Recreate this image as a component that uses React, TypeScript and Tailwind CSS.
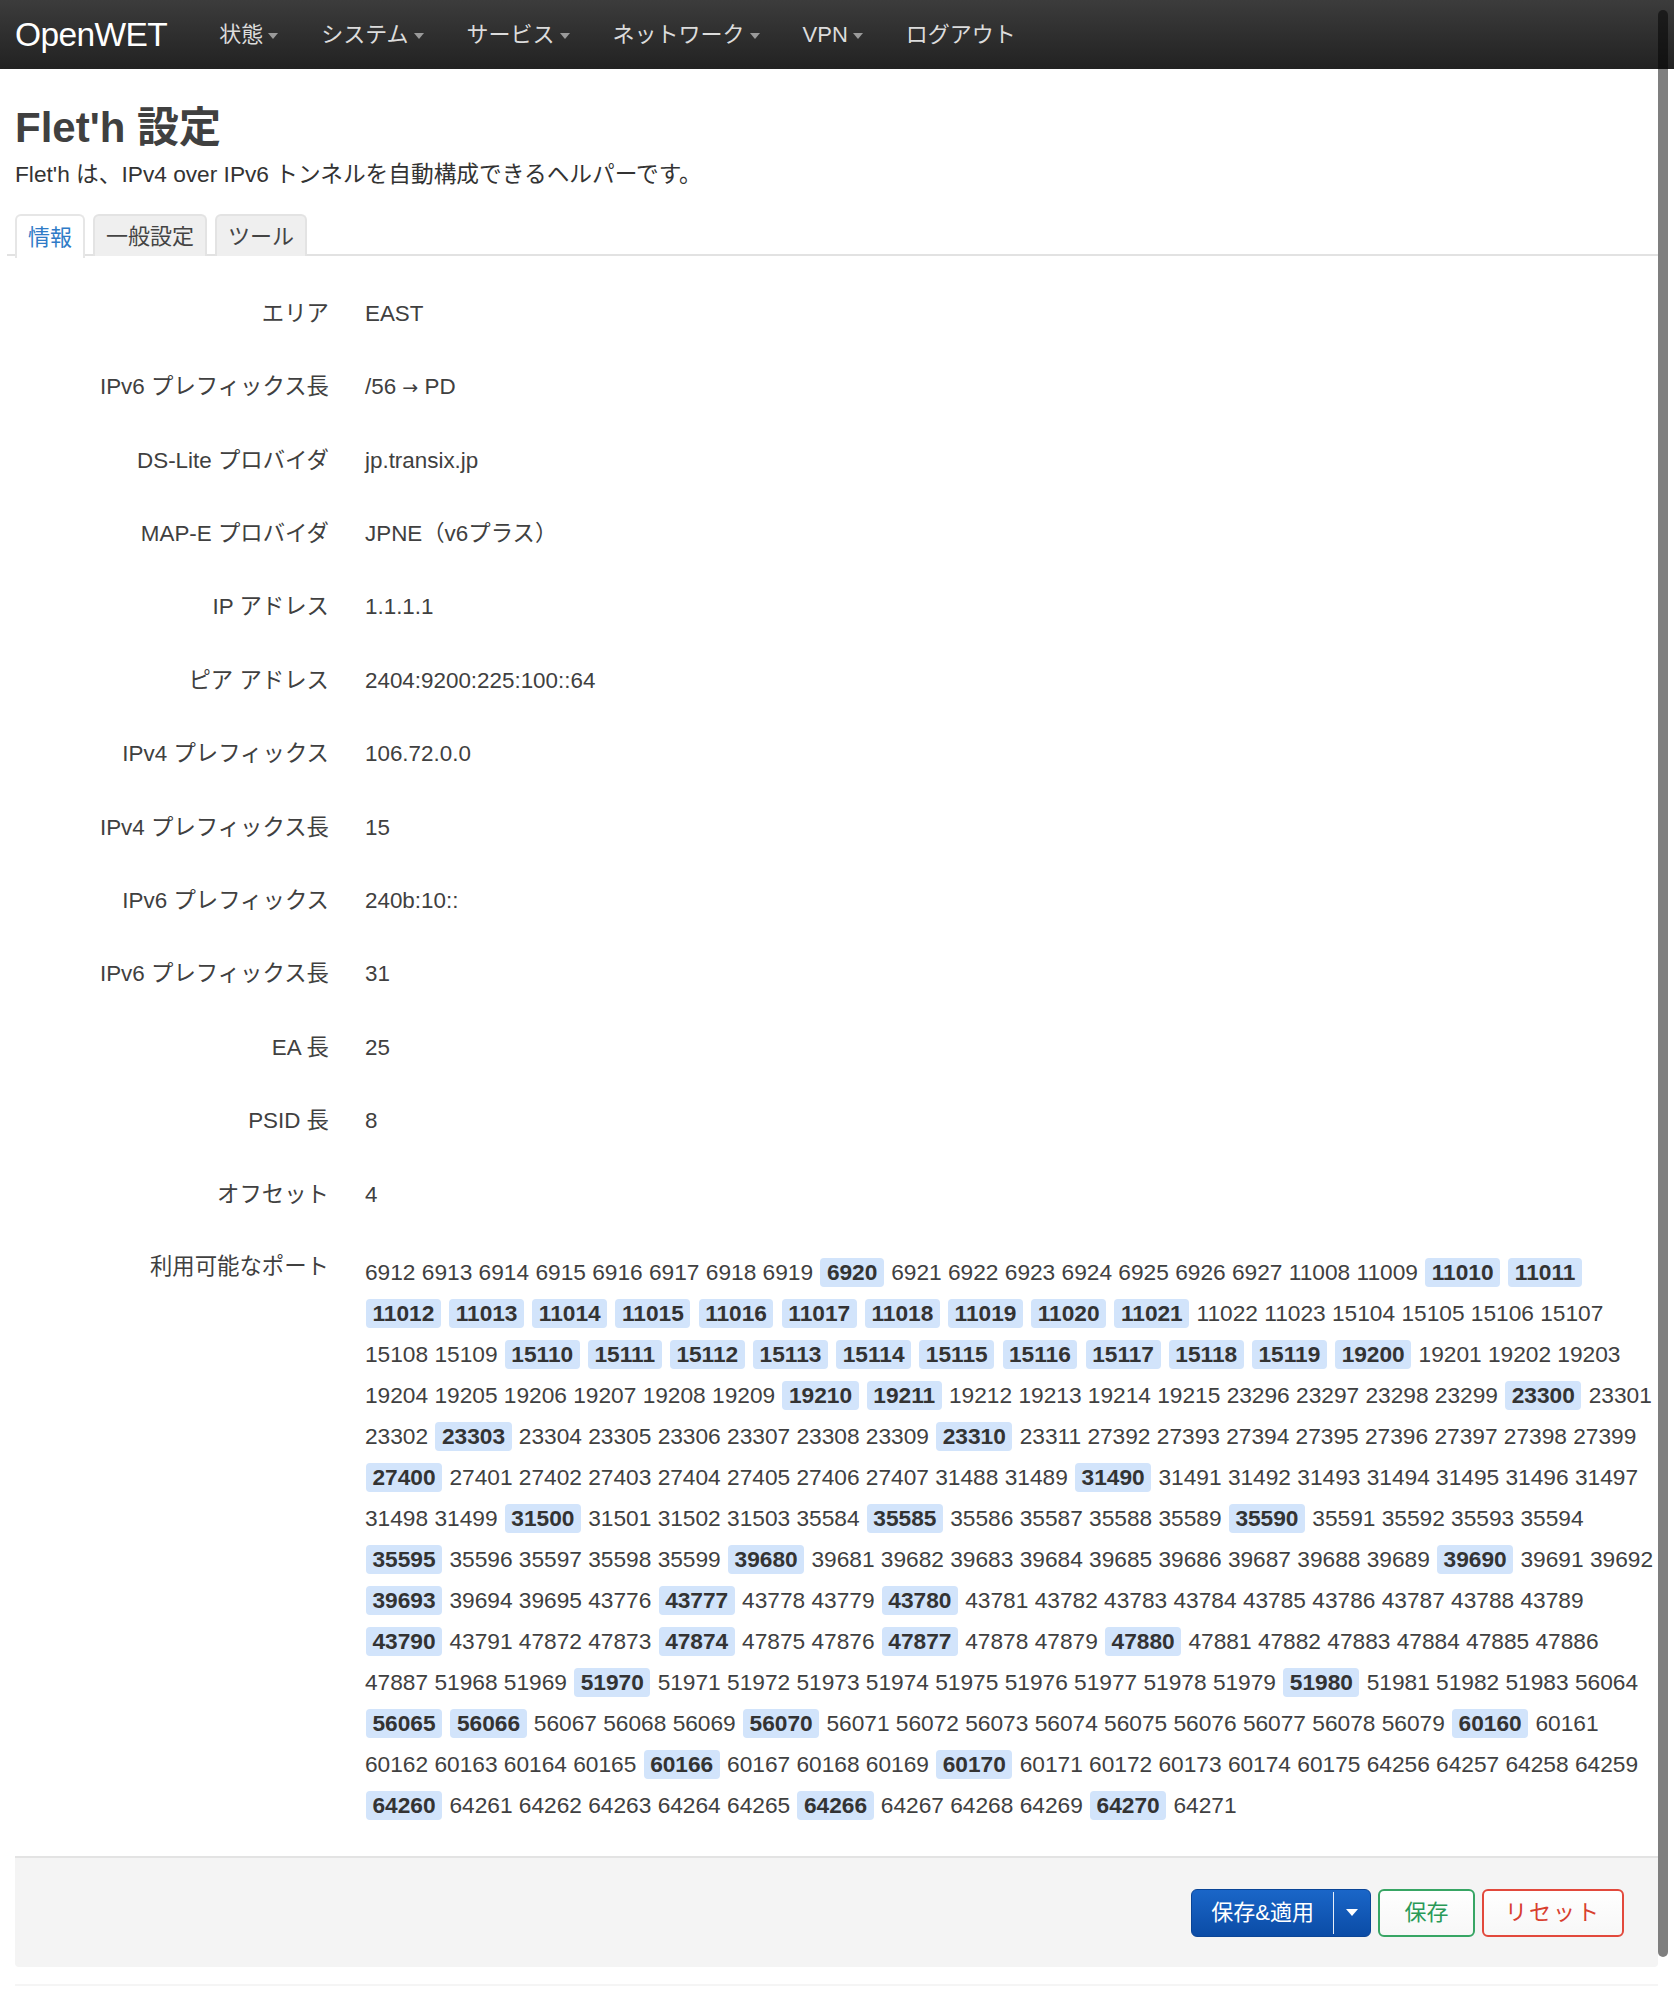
import React from "react";

const font = "font-['Liberation_Sans','Noto_Sans_CJK_JP',sans-serif]";

const navItems = [
  { label: "状態", caret: true },
  { label: "システム", caret: true },
  { label: "サービス", caret: true },
  { label: "ネットワーク", caret: true },
  { label: "VPN", caret: true },
  { label: "ログアウト", caret: false },
];

const rows: [string, React.ReactNode][] = [
  ["エリア", "EAST"],
  [
    "IPv6 プレフィックス長",
    <>
      /56 <span className="font-['DejaVu_Sans',sans-serif] text-[19px]">→</span> PD
    </>,
  ],
  ["DS-Lite プロバイダ", "jp.transix.jp"],
  ["MAP-E プロバイダ", "JPNE（v6プラス）"],
  ["IP アドレス", "1.1.1.1"],
  ["ピア アドレス", "2404:9200:225:100::64"],
  ["IPv4 プレフィックス", "106.72.0.0"],
  ["IPv4 プレフィックス長", "15"],
  ["IPv6 プレフィックス", "240b:10::"],
  ["IPv6 プレフィックス長", "31"],
  ["EA 長", "25"],
  ["PSID 長", "8"],
  ["オフセット", "4"],
];

// 15 blocks of 16 ports, as computed by the MAP-E rule
const ports: number[] = [];
for (let a = 1; a <= 15; a++) {
  const base = a * 4096 + 2816;
  for (let i = 0; i < 16; i++) ports.push(base + i);
}

const marked = new Set([
  6920, 11010, 11011, 11012, 11013, 11014, 11015, 11016, 11017, 11018, 11019, 11020, 11021,
  15110, 15111, 15112, 15113, 15114, 15115, 15116, 15117, 15118, 15119, 19200, 19210, 19211,
  23300, 23303, 23310, 27400, 31490, 31500, 35585, 35590, 35595, 39680, 39690, 39693, 43777,
  43780, 43790, 47874, 47877, 47880, 51970, 51980, 56065, 56066, 56070, 60160, 60166, 60170,
  64260, 64266, 64270,
]);

const lineCounts = [20, 16, 16, 18, 18, 18, 17, 18, 17, 17, 18, 17, 18, 12];
const portLines: number[][] = [];
{
  let idx = 0;
  for (const n of lineCounts) {
    portLines.push(ports.slice(idx, idx + n));
    idx += n;
  }
}

function Caret() {
  return (
    <span className="inline-block w-0 h-0 border-x-[5px] border-x-transparent border-t-[6px] border-t-[#9a9a9a] ml-[5px] mt-[3px]" />
  );
}

function Header() {
  return (
    <header className="h-[69px] bg-gradient-to-b from-[#3c3c3c] to-[#222222] flex items-center pl-[15px]">
      <div className="text-[33.5px] text-white font-light tracking-[-0.6px] leading-none">OpenWET</div>
      <nav className="flex items-center ml-[52px] gap-[43px]">
        {navItems.map((n) => (
          <div key={n.label} className="flex items-center text-[22px] text-[#dcdcdc] leading-none">
            {n.label}
            {n.caret && <Caret />}
          </div>
        ))}
      </nav>
    </header>
  );
}

function Tabs() {
  const tabs = ["情報", "一般設定", "ツール"];
  return (
    <div className="mt-[25px] -ml-[8px] pl-[8px] border-b-2 border-[#e2e2e2] flex gap-[8px] h-[42px]">
      {tabs.map((t, i) =>
        i === 0 ? (
          <div
            key={t}
            className="px-[11px] h-[44px] -mb-[2px] bg-white border-2 border-b-0 border-[#e6e6e6] rounded-t-[6px] text-[22px] text-[#2f7bc7] flex items-center"
          >
            {t}
          </div>
        ) : (
          <div
            key={t}
            className="px-[11px] h-[42px] bg-[#efefef] border-2 border-b-0 border-[#e3e3e3] rounded-t-[6px] text-[22px] text-[#444] flex items-center"
          >
            {t}
          </div>
        )
      )}
    </div>
  );
}

function Ports() {
  return (
    <div className="pt-[21px] text-[22.7px] text-[#404040]">
      {portLines.map((line, li) => (
        <div key={li} className="h-[41px] leading-[41px] whitespace-nowrap">
          {line.map((p, pi) => (
            <React.Fragment key={p}>
              {pi > 0 && " "}
              {marked.has(p) ? (
                <span className="inline-block leading-[29px] px-[6.5px] mx-[1px] rounded-[4px] bg-[#d2e4fb] font-bold text-[#333]">
                  {p}
                </span>
              ) : (
                <span>{p}</span>
              )}
            </React.Fragment>
          ))}
        </div>
      ))}
    </div>
  );
}

export default function App() {
  return (
    <div className={`relative min-h-screen bg-white ${font}`}>
      <Header />
      <main className="px-[15px] pr-[16px]">
        <h1 className="pt-[35px] text-[42px] font-bold leading-[48px] text-[#404040]">Flet'h 設定</h1>
        <p className="mt-[7px] text-[22.7px] leading-[30px] text-[#333]">
          Flet'h は、IPv4 over IPv6 トンネルを自動構成できるヘルパーです。
        </p>
        <Tabs />
        <section className="pt-[21px]">
          {rows.map(([k, v]) => (
            <div key={k} className="flex items-center h-[73.4px] text-[22.4px] text-[#404040]">
              <div className="w-[314px] text-right">{k}</div>
              <div className="ml-[36px]">{v}</div>
            </div>
          ))}
          <div className="flex text-[22.4px] text-[#404040]">
            <div className="w-[314px] text-right pt-[15px] leading-[41px]">利用可能なポート</div>
            <div className="ml-[36px]">
              <Ports />
            </div>
          </div>
        </section>
        <footer className="mt-[30px] border-t-2 border-[#e3e3e3] bg-[#f4f4f4] h-[111px] flex items-center justify-end pr-[34px] gap-[7px] rounded-b-[4px]">
          <div className="flex h-[48px] rounded-[6px] bg-gradient-to-b from-[#1a66c8] to-[#0b4ca6] border border-[#0a4597] text-white text-[22px]">
            <div className="px-[19px] flex items-center">保存&amp;適用</div>
            <div className="w-px my-[2px] bg-white/90" />
            <div className="w-[36px] flex items-center justify-center">
              <span className="inline-block w-0 h-0 border-x-[6px] border-x-transparent border-t-[7px] border-t-white" />
            </div>
          </div>
          <div className="h-[48px] w-[97px] rounded-[6px] border-2 border-[#37a564] bg-gradient-to-b from-white to-[#f7f7f7] text-[#2a9a58] text-[22px] flex items-center justify-center">
            保存
          </div>
          <div className="h-[48px] w-[142px] rounded-[6px] border-2 border-[#e2493c] bg-gradient-to-b from-white to-[#f7f7f7] text-[#d8402f] text-[22px] flex items-center justify-center tracking-[2px]">
            リセット
          </div>
        </footer>
        <div className="mt-[17px] border-t-2 border-[#f5f5f5]" />
      </main>
      <div className="absolute top-[10px] right-[6px] w-[10px] h-[1947px] rounded-full bg-black/50" />
    </div>
  );
}
